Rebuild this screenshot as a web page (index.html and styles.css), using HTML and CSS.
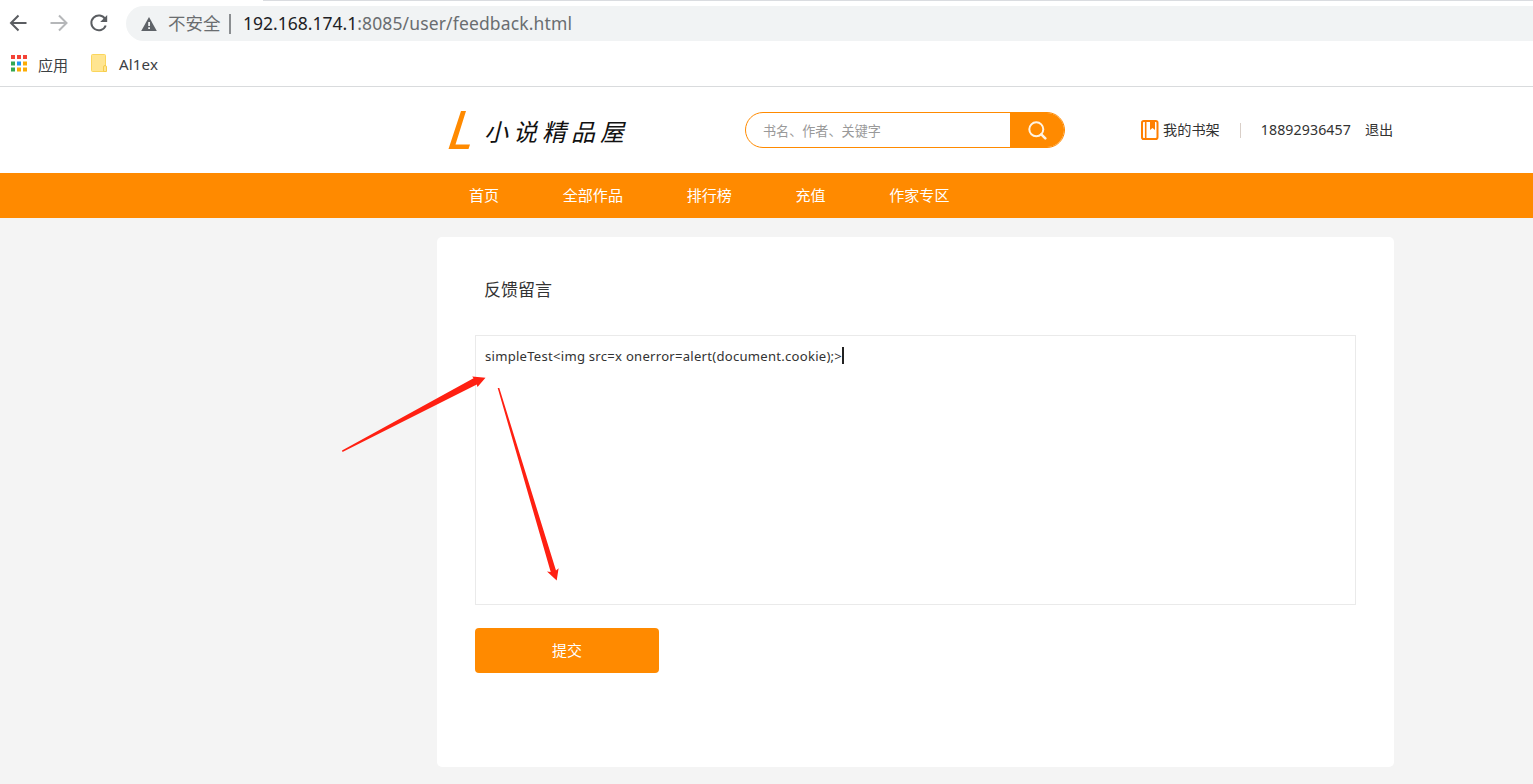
FILE: index.html
```html
<!DOCTYPE html>
<html lang="zh-CN">
<head>
<meta charset="utf-8">
<title>反馈留言</title>
<link rel="stylesheet" href="styles.css">
</head>
<body>
<div class="browser">
  <div class="tab-edge"></div>
  <div class="toolbar">
    <svg class="tools" width="126" height="36" viewBox="0 5 126 36" fill="none" stroke-width="2">
      <path d="M26.500 23H11.500M18.500 15.500L11 23l7.500 7.500" stroke="#5a5d61"/>
      <path d="M50.500 23H66M59 15.500L66.500 23 59 30.500" stroke="#b5b7b9"/>
      <path d="M105.200 19.200A7.400 7.400 0 1 0 105.700 25.500" stroke="#5a5d61"/>
      <path d="M107.200 15v7h-7z" fill="#5a5d61"/>
    </svg>
    <div class="address">
      <svg class="warn" width="16" height="14" viewBox="0 0 16 14"><path d="M8 0l7.800 14H.2z" fill="#5f6368"/><path d="M7.200 5h1.800v4H7.200zM7.200 10.200h1.800V12H7.200z" fill="#f1f3f4"/></svg>
      <span class="insecure">不安全</span>
      <span class="address-bar"></span>
      <span class="url"><b>192.168.174.1</b>:8085/user/feedback.html</span>
    </div>
  </div>
  <div class="bookmarks">
    <svg class="apps" width="18" height="18" viewBox="0 0 18 18">
      <path d="M1 0h4v4H1zM7 0h4v4H7zM13 0h4v4h-4z" fill="#f44336"/>
      <path d="M1 6.500h4v4H1zM1 12.500h4v4H1z" fill="#34a853"/>
      <path d="M7 6.500h4v4H7z" fill="#2196f3"/>
      <path d="M13 6.500h4v4h-4zM7 12.500h4v4H7zM13 12.500h4v4h-4z" fill="#fbac05"/>
    </svg>
    <span class="apps-label">应用</span>
    <svg class="folder" width="16" height="19" viewBox="0 0 16 19"><rect x=".5" y=".5" width="14" height="17" rx="1" fill="#ffe591" stroke="#fbd65c"/><path d="M12.500 17.500v-4.500q0-1.500 1.500-1.500t1.500 1.500v4.500z" fill="#ffe591" stroke="#f5cc4c"/></svg>
    <span class="folder-label">Al1ex</span>
  </div>
</div>

<header class="header">
  <div class="container header-row">
    <div class="logo">
      <svg width="24" height="40" viewBox="0 0 24 40"><path d="M13 1h5L7.500 34.500H22L20.500 39H.5z" fill="#ff8a00"/></svg>
      <span class="logo-text">小说精品屋</span>
    </div>
    <div class="search">
      <span class="search-input">书名、作者、关键字</span>
      <span class="search-button"><svg width="19" height="19" viewBox="0 0 19 19" fill="none" stroke="#fff3e2" stroke-width="2"><circle cx="8.300" cy="8.300" r="7"/><path d="M13.300 13.300l4 4" stroke-width="2.600" stroke-linecap="round"/></svg></span>
    </div>
    <div class="account">
      <svg width="18" height="20" viewBox="0 0 18 20"><rect x="1" y="1" width="15.500" height="18" rx="1.800" fill="#fff" stroke="#ff7f00" stroke-width="2"/><path d="M4.700 1v18" stroke="#ff7f00" stroke-width="1.600"/><path d="M9 1h5v9l-2.500-2L9 10z" fill="#ff7f00"/></svg>
      <span class="shelf">我的书架</span>
      <span class="divider"></span>
      <span class="phone">18892936457</span>
      <span class="logout">退出</span>
    </div>
  </div>
</header>

<nav class="nav">
  <div class="container nav-row">
    <span>首页</span><span>全部作品</span><span>排行榜</span><span>充值</span><span>作家专区</span>
  </div>
</nav>

<main class="container card">
  <h1 class="title">反馈留言</h1>
  <div class="textarea"><span class="entry">simpleTest&lt;img src=x onerror=alert(document.cookie);&gt;</span><span class="caret"></span></div>
  <div class="submit">提交</div>
</main>

<svg class="arrows" width="1533" height="784" viewBox="0 0 1533 784" fill="#ff2012">
  <path d="M342 450.500L473.500 378.200 472.200 376.500 485.500 377.800 477.500 387 476.800 384.500 342.500 452z"/>
  <path d="M497.700 388L499.300 388 556 570.500 558.600 568.200 556.700 580.500 547 571.500 550.700 572z"/>
</svg>
</body>
</html>
```
FILE: styles.css
```css
* { box-sizing: border-box; }
body {
  margin: 0;
  height: 784px;
  overflow: hidden;
  background: #f4f4f4;
  color: #333;
  font-family: "Noto Sans", "Noto Sans CJK SC", sans-serif;
  white-space: nowrap;
}
svg { display: block; flex: none; }
.browser { height: 87px; background: #fff; border-bottom: 1px solid #d9dbdd; }
.tab-edge { height: 1px; margin-left: 263px; background: #dadce0; }
.toolbar { display: flex; height: 40px; padding-top: 5px; }
.tools { margin-top: -1px; }
.address {
  flex: 1;
  display: flex;
  align-items: center;
  height: 35px;
  padding-left: 15px;
  border-radius: 18px 0 0 18px;
  background: #f1f3f4;
  font-size: 17.5px;
  color: #6a6d70;
}
.insecure { width: 53px; margin-left: 11px; padding-bottom: 2px; }
.address-bar { width: 2px; height: 20px; margin-left: 8px; background: #8b8e91; }
.url { margin-left: 12px; padding-bottom: 2px; letter-spacing: 0.14px; }
.url b { font-weight: 400; letter-spacing: 0; color: #202124; }
.bookmarks { display: flex; align-items: center; height: 45px; padding-left: 10px; font-size: 15.1px; color: #3c4043; }
.apps { margin-left: -0.5px; }
.apps-label { width: 30px; margin-left: 10.5px; }
.folder { margin-left: 23px; }
.folder-label { margin-left: 12px; letter-spacing: 0.15px; }

.container { width: 957px; margin-left: 437px; }
.header { height: 86px; background: #fff; }
.header-row { display: flex; align-items: center; height: 86px; }
.logo { display: flex; align-items: center; width: 308px; padding-left: 11px; }
.logo-text {
  margin-left: 12px;
  padding-top: 2px;
  font-family: "Noto Sans CJK SC", sans-serif;
  font-size: 24px;
  font-style: italic;
  font-weight: 400;
  letter-spacing: 5px;
  line-height: 36px;
  color: #111;
}
.search { display: flex; width: 320px; height: 36px; border: 1px solid #ff8a00; border-radius: 18px; overflow: hidden; }
.search-input { flex: 1; padding-left: 17px; font-size: 13.1px; line-height: 36px; color: #999; }
.search-button { display: flex; align-items: center; justify-content: center; width: 54px; background: #ff8a00; }
.account { display: flex; align-items: center; margin-left: 76px; font-size: 14.2px; }
.shelf { margin-left: 4px; padding-bottom: 2px; }
.divider { width: 1px; height: 15px; margin: 0 20px; background: #d9cfc8; }
.phone { padding-bottom: 2px; letter-spacing: 0.08px; }
.logout { margin-left: 14px; padding-bottom: 2px; }
.nav { height: 45px; background: #ff8a00; }
.nav-row { display: flex; gap: 63.7px; padding-left: 32px; font-size: 15.05px; line-height: 45px; color: #fff; }

.card { height: 530px; margin-top: 19px; padding: 38px; border-radius: 5px; background: #fff; }
.title { margin: 0 0 30px; padding-left: 9px; font-size: 17px; font-weight: 400; line-height: 30px; }
.textarea { display: flex; width: 881px; height: 270px; padding: 11px 9px; border: 1px solid #eaeaea; font-size: 13.1px; line-height: 19px; }
.entry { letter-spacing: 0.255px; }
.caret { width: 2px; height: 17px; background: #222; }
.submit { width: 184px; height: 45px; margin-top: 23px; border-radius: 4px; background: #ff8a00; color: #fff; font-size: 15px; line-height: 45px; text-align: center; }
.arrows { position: absolute; top: 0; left: 0; pointer-events: none; }
```
